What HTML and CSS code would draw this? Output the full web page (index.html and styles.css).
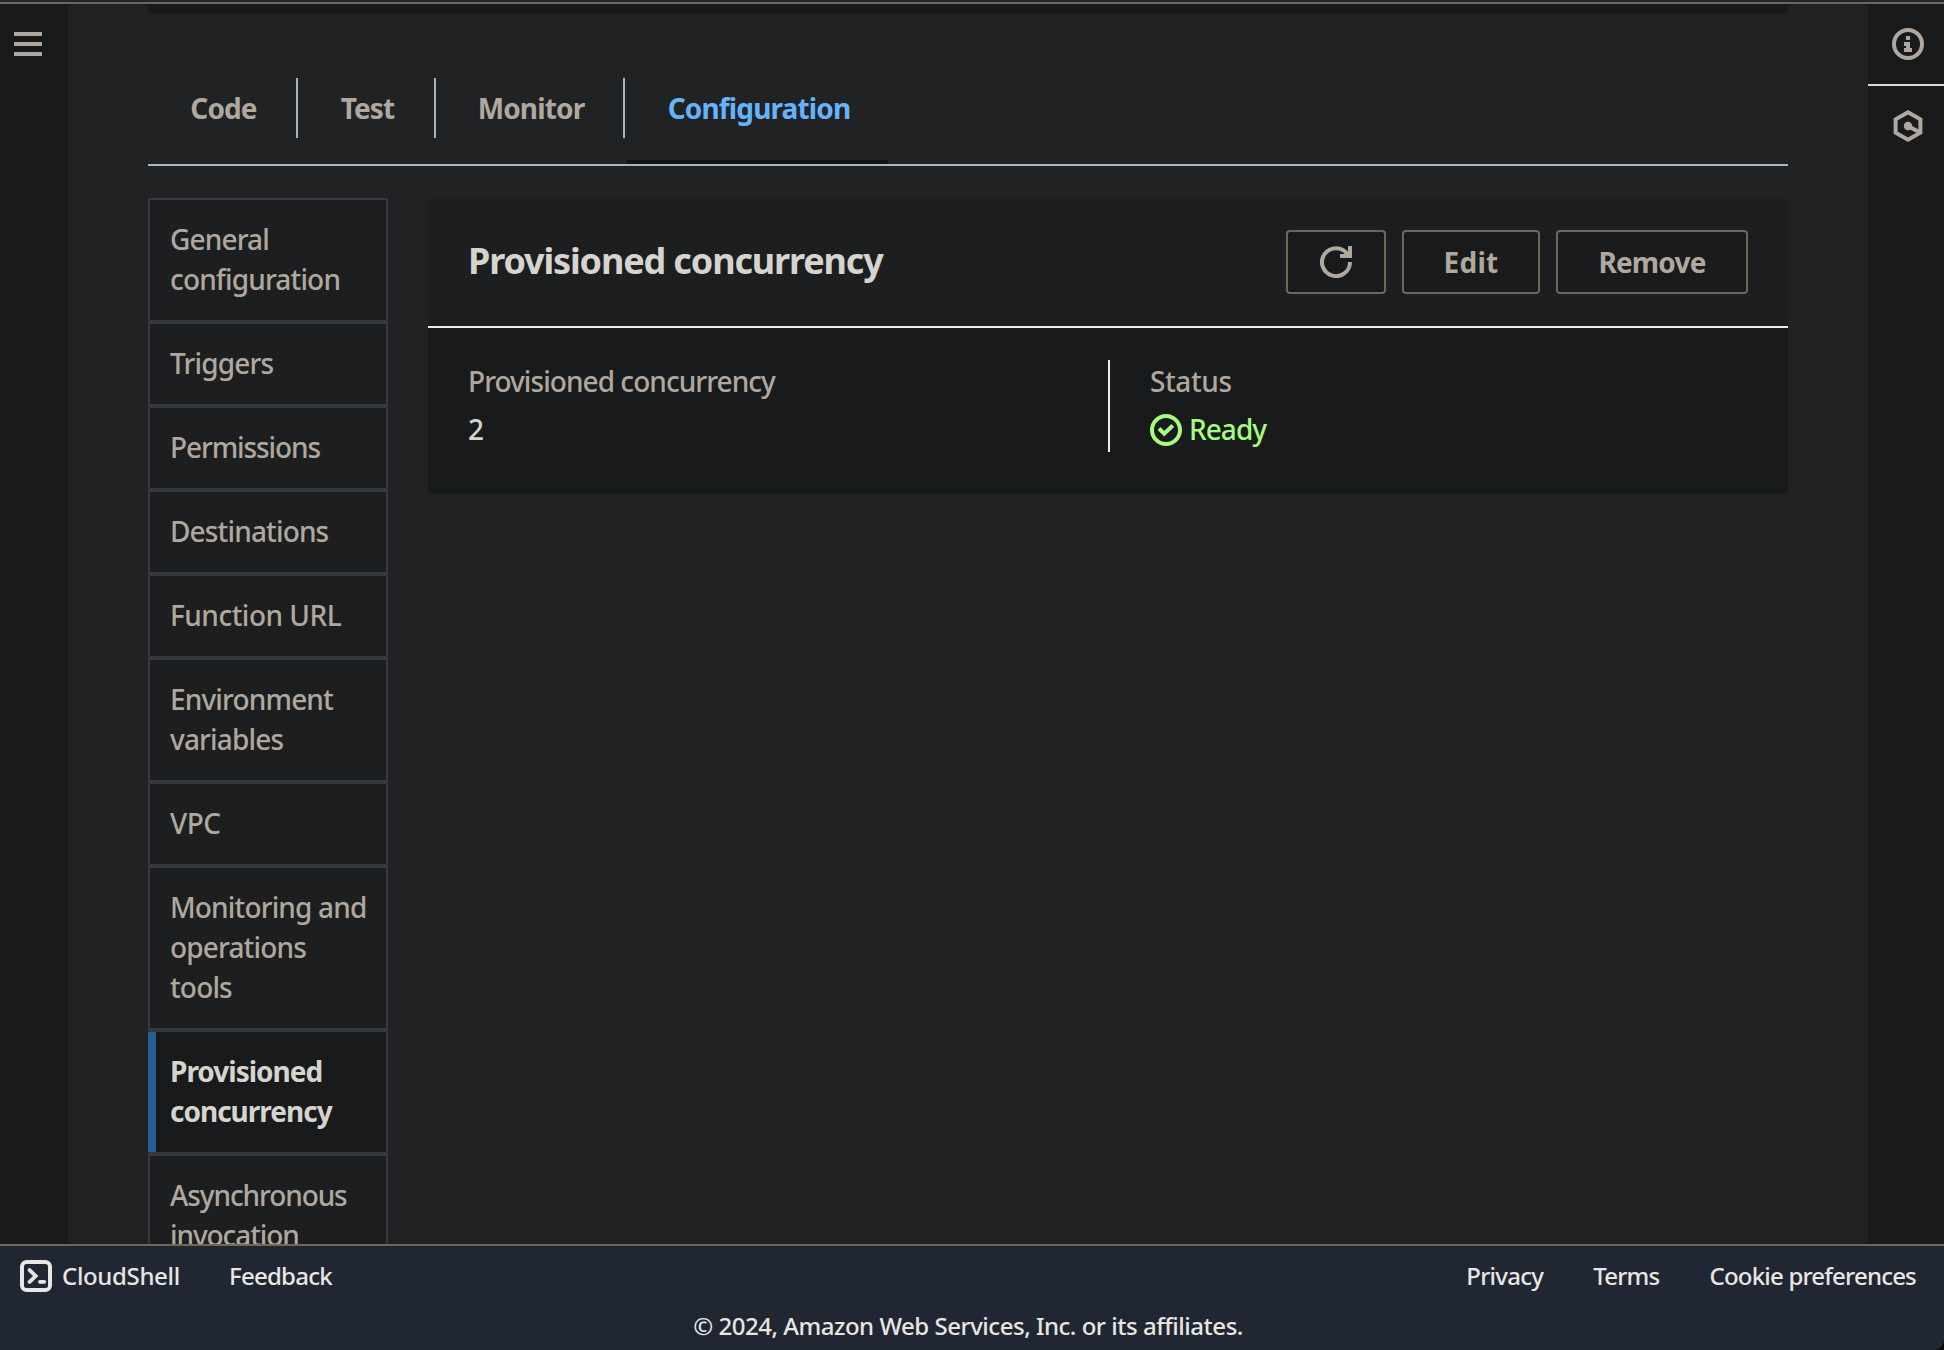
FILE: index.html
```html
<!DOCTYPE html>
<html lang="en">
<head>
<meta charset="utf-8">
<title>Provisioned concurrency - Lambda</title>
<link rel="stylesheet" href="styles.css">
</head>
<body>
<div class="app">
  <div class="topbar"></div>
  <div class="shell">
    <aside class="rail rail-left">
      <button class="icon-btn menu-btn" aria-label="Open navigation">
        <svg width="28" height="24" viewBox="0 0 28 24"><path d="M0 2h28M0 12h28M0 22h28"/></svg>
      </button>
    </aside>
    <main class="content">
      <div class="previous-card"></div>
      <nav class="tabs">
        <a class="tab tab-code">Code</a>
        <a class="tab tab-test">Test</a>
        <a class="tab tab-monitor">Monitor</a>
        <a class="tab tab-config active">Configuration</a>
      </nav>
      <div class="columns">
        <ul class="side-nav">
          <li>General configuration</li>
          <li>Triggers</li>
          <li class="snug">Permissions</li>
          <li>Destinations</li>
          <li class="roomy">Function URL</li>
          <li>Environment variables</li>
          <li class="roomy">VPC</li>
          <li>Monitoring and operations tools</li>
          <li class="selected">Provisioned concurrency</li>
          <li class="snug">Asynchronous invocation</li>
        </ul>
        <section class="card">
          <header class="card-header">
            <h2>Provisioned concurrency</h2>
            <div class="actions">
              <button class="btn btn-refresh" aria-label="Refresh">
                <svg width="32" height="32" viewBox="0 0 16 16"><path d="M15 8a7 7 0 1 1-1.3-4M10 5h5V0"/></svg>
              </button>
              <button class="btn btn-edit">Edit</button>
              <button class="btn btn-remove">Remove</button>
            </div>
          </header>
          <div class="card-body">
            <div class="field">
              <div class="label">Provisioned concurrency</div>
              <div class="value">2</div>
            </div>
            <div class="field field-status">
              <div class="label label-status">Status</div>
              <div class="value status">
                <svg width="32" height="32" viewBox="0 0 32 32"><circle cx="16" cy="16" r="14"/><path d="M9 14.5l5.2 5.3 8.6-8.3"/></svg>
                <span>Ready</span>
              </div>
            </div>
          </div>
        </section>
      </div>
    </main>
    <aside class="rail rail-right">
      <button class="icon-btn info-btn" aria-label="Info">
        <svg width="32" height="32" viewBox="0 0 32 32"><circle cx="16" cy="16" r="14"/><path class="solid" d="M14 8h4v4h-4zM12 14h6v6h2v4h-8v-4h2v-2h-2z"/></svg>
      </button>
      <button class="icon-btn hex-btn" aria-label="Tutorials">
        <svg width="32" height="32" viewBox="0 0 32 32"><path d="M16 2.3l12.4 7v13.4l-12.4 7-12.4-7V9.3zM16 16l11 6"/><circle class="solid" cx="16" cy="16" r="4.2"/></svg>
      </button>
    </aside>
  </div>
  <footer class="footer">
    <div class="footer-row">
      <a class="cloudshell">
        <svg width="32" height="32" viewBox="0 0 32 32"><rect x="2" y="2" width="28" height="28" rx="4.5"/><path class="prompt" d="M9.6 10.1l6.100 5.900-6.100 5.900M20 21.800h4.200"/></svg>
        <span>CloudShell</span>
      </a>
      <a class="feedback">Feedback</a>
      <div class="legal">
        <a>Privacy</a>
        <a>Terms</a>
        <a class="cookies">Cookie preferences</a>
      </div>
    </div>
    <div class="copyright">© 2024, Amazon Web Services, Inc. or its affiliates.</div>
  </footer>
</div>
</body>
</html>
```
FILE: styles.css
```css
* { box-sizing: border-box; }

body {
  margin: 0;
  background: #0b0a08;
  font-family: "Noto Sans", "Open Sans", sans-serif;
  font-size: 28px;
  font-weight: 500;
  line-height: 40px;
  letter-spacing: -0.85px;
  color: #b0a89e;
}

button {
  margin: 0;
  padding: 0;
  border: 0;
  background: none;
  font: inherit;
  letter-spacing: inherit;
  color: inherit;
}

svg {
  display: block;
  flex: none;
  fill: none;
  stroke: currentColor;
  stroke-width: 4;
}

.solid { fill: currentColor; stroke: none; }

.prompt { stroke-width: 3.8; stroke-linecap: round; }

.app {
  display: flex;
  flex-direction: column;
  height: 1350px;
  overflow: hidden;
}

.topbar {
  flex: none;
  height: 4px;
  background: #1f2731;
  border-bottom: 2px solid #6f6859;
}

.shell {
  display: grid;
  grid-template-columns: 68px 1fr 76px;
  height: 1240px;
  overflow: hidden;
  background: #212224;
}

.rail { background: #191a1b; }

.rail-left { padding: 28px 14px; }

.icon-btn { display: flex; justify-content: center; }

.rail-right .icon-btn { width: 100%; }

.info-btn {
  height: 82px;
  padding-top: 24px;
  padding-left: 4px;
  border-bottom: 2px solid #d5dbdb;
}

.hex-btn { padding-top: 24px; padding-left: 4px; }

.content { padding: 0 80px; min-width: 0; }

.previous-card {
  height: 9px;
  background: #191a1b;
  box-shadow: 0 1px 1px #16201f;
}

.tabs {
  display: flex;
  height: 97px;
  margin-top: 56px;
  padding-top: 9px;
  border-bottom: 2px solid #aab7b8;
  font-weight: 700;
  letter-spacing: -0.85px;
}

.tab {
  height: 60px;
  padding-top: 10px;
  padding-left: 3px;
  text-align: center;
  border-right: 2px solid #aab7b8;
}

.tab-code { width: 150px; }
.tab-test { width: 138px; }
.tab-monitor { width: 189px; }

.tab-config {
  width: 261px;
  height: 86px;
  margin-left: 2px;
  border-right: 0;
  border-bottom: 4px solid #121417;
}

.tab.active { color: #67b3fb; }

.columns {
  display: grid;
  grid-template-columns: 240px 1360px;
  column-gap: 40px;
  align-items: start;
  margin-top: 32px;
}

.side-nav {
  margin: 0;
  padding: 0;
  list-style: none;
}

.side-nav li {
  padding: 19px 14px 21px 20px;
  background: #1c1e1f;
  border: 2px solid #363a3c;
}

.side-nav .roomy { letter-spacing: -0.5px; }
.side-nav .snug { letter-spacing: -1.1px; }

.side-nav .selected {
  position: relative;
  background: #191a1b;
  color: #d6d4ce;
  font-weight: 700;
  letter-spacing: -1px;
}

.side-nav .selected::before {
  content: "";
  position: absolute;
  left: -2px;
  top: 0;
  bottom: 0;
  width: 8px;
  background: #265e96;
}

.card {
  background: #191a1b;
  box-shadow: 0 1px 1px #16201f;
}

.card-header {
  display: flex;
  justify-content: space-between;
  height: 130px;
  padding: 32px 40px 0;
  background: #1c1e1f;
  border-bottom: 2px solid #eaeded;
}

h2 {
  margin: 7px 0 0;
  font-size: 36px;
  line-height: 48px;
  letter-spacing: -1.15px;
  color: #d6d4ce;
}

.actions { display: flex; gap: 16px; }

.btn {
  display: flex;
  align-items: center;
  justify-content: center;
  height: 64px;
  border: 2px solid #6f6859;
  border-radius: 4px;
  background: #191a1b;
  font-weight: 700;
  letter-spacing: -0.8px;
}

.btn svg { stroke-width: 2; }
.btn-refresh { width: 100px; }
.btn-edit { width: 138px; letter-spacing: 0.3px; }
.btn-remove { width: 192px; }

.card-body {
  display: grid;
  grid-template-columns: 1fr 1fr;
  height: 165px;
  padding: 32px 0;
}

.field { padding-left: 40px; height: 92px; }

.field-status { border-left: 2px solid #eaeded; }

.label {
  height: 44px;
  margin-bottom: 4px;
  line-height: 43px;
  letter-spacing: -0.95px;
}

.label-status { letter-spacing: -0.4px; }

.value { line-height: 42px; color: #d6d4ce; }

.status {
  display: flex;
  align-items: center;
  gap: 7px;
  height: 44px;
  color: #a6fb7e;
  letter-spacing: -0.95px;
}

.status span { padding-bottom: 2px; }

.footer {
  flex: 1;
  padding: 0 28px 0 20px;
  background: #202733;
  border-top: 2px solid #6f6859;
  border-bottom-right-radius: 10px;
  color: #e8e6e3;
  font-size: 24px;
  line-height: 32px;
  letter-spacing: -0.75px;
}

.footer-row {
  display: flex;
  padding-top: 14px;
  height: 64px;
}

.cloudshell {
  display: flex;
  gap: 10px;
  width: 209px;
  letter-spacing: -0.35px;
}

.legal { display: flex; gap: 50px; margin-left: auto; }

.cookies { letter-spacing: -0.8px; }

.copyright {
  text-align: center;
  letter-spacing: -0.48px;
}
```
